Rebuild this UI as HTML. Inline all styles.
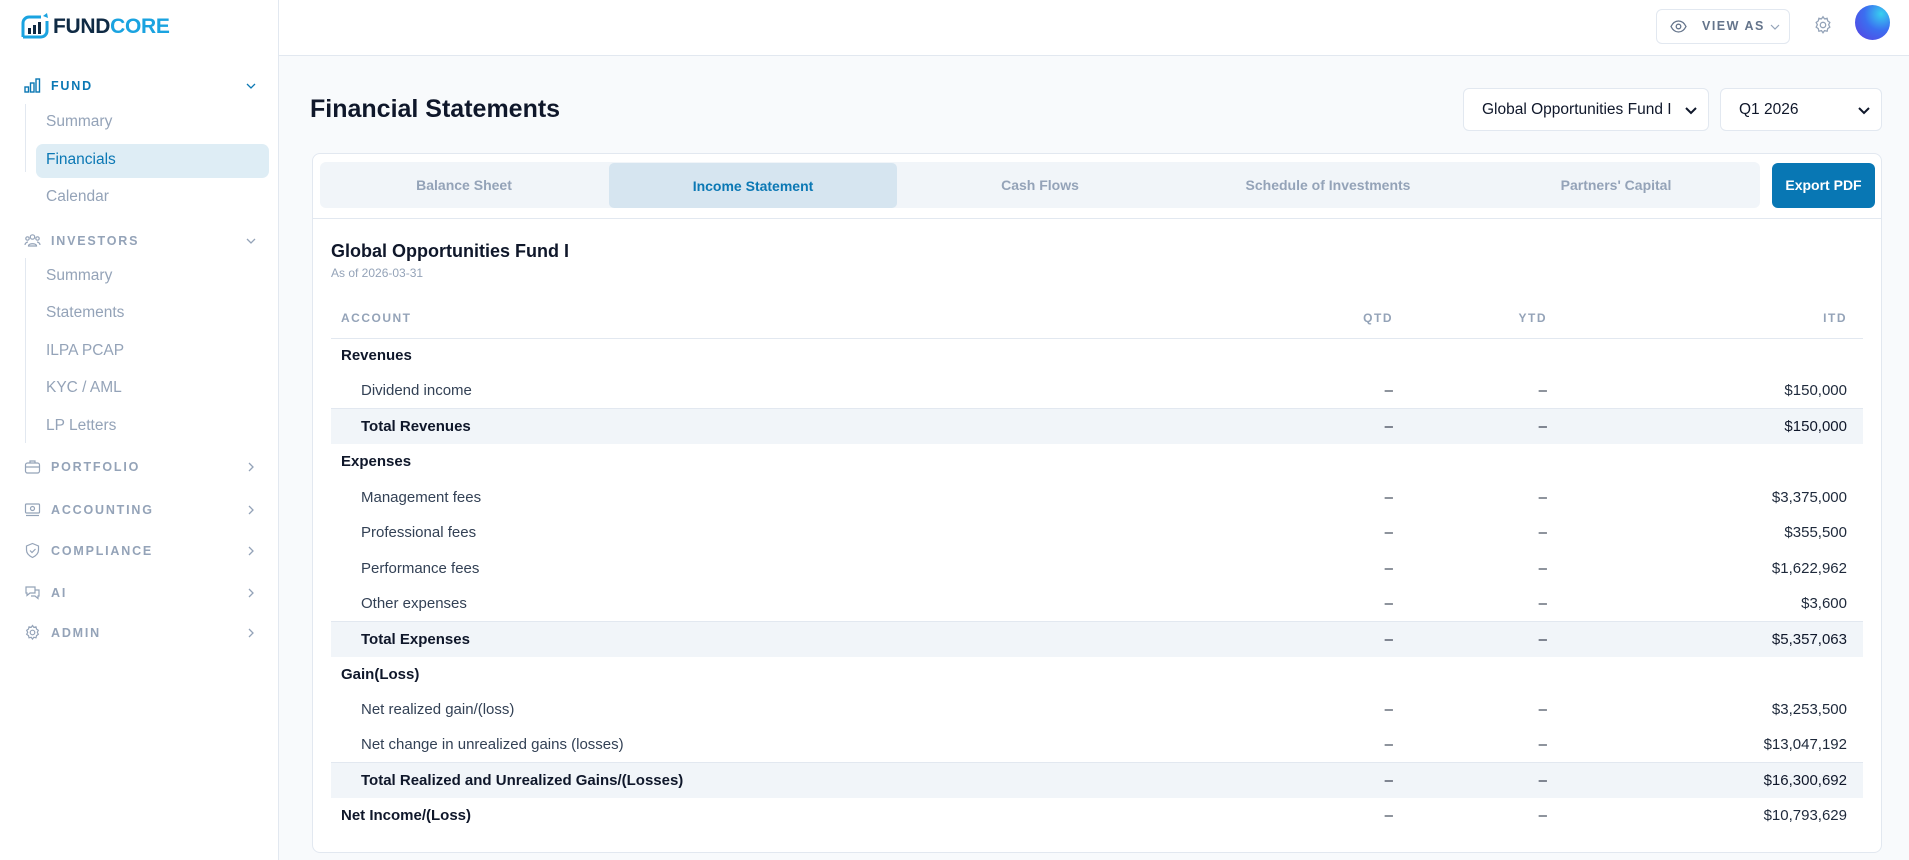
<!DOCTYPE html>
<html><head><meta charset="utf-8"><style>
*{box-sizing:border-box;margin:0;padding:0}
body{width:1909px;height:860px;overflow:hidden;font-family:"Liberation Sans",sans-serif;background:#f8fafc;color:#0f172a;position:relative}
.sb{position:absolute;left:0;top:0;width:279px;height:860px;background:#fff;border-right:1px solid #e2e8f0}
.hdr{position:absolute;left:279px;top:0;right:0;height:56px;background:#fff;border-bottom:1px solid #e2e8f0}
.logo{position:absolute;left:20px;top:13px;display:flex;align-items:center;font-weight:bold;font-size:21px;letter-spacing:-0.3px}
.sec{position:absolute;left:24px;display:flex;align-items:center;font-size:12.5px;font-weight:bold;letter-spacing:1.8px;color:#94a3b8;width:234px}
.sec svg{width:17px;height:17px;margin-right:10px}
.sec .ch{position:absolute;right:0;top:50%;margin-top:-7px;width:14px;height:14px;margin-right:0}
.it{position:absolute;left:46px;font-size:15.5px;color:#94a3b8}
.vl{position:absolute;left:25px;width:1px;background:#e2e8f0}
.act{position:absolute;left:36px;top:144px;width:233px;height:34px;background:#deedf5;border-radius:7px}
.title{position:absolute;left:310px;top:95px;font-size:25px;font-weight:bold}
.sel{position:absolute;top:88px;height:43px;background:#fff;border:1px solid #e2e8f0;border-radius:6px;font-size:15.5px;padding:12px 0 0 18px;color:#0f172a}
.sel svg{position:absolute;right:10px;top:14px}
.card{position:absolute;left:312px;top:153px;width:1570px;height:700px;background:#fff;border:1px solid #e2e8f0;border-radius:8px}
.tabs{position:absolute;left:320px;top:162px;width:1440px;height:46px;background:#f1f5f9;border-radius:6px}
.tab{position:absolute;top:0;height:46px;line-height:46px;text-align:center;font-size:14px;font-weight:bold;color:#94a3b8;width:288px}
.tab.a{background:#d6e5f0;color:#0b78b4;border-radius:5px;top:1px;height:45px}
.exp{position:absolute;left:1772px;top:163px;width:103px;height:45px;background:#0877b4;border-radius:6px;color:#fff;font-weight:bold;font-size:14px;line-height:45px;text-align:center}
.div{position:absolute;left:313px;top:218px;width:1568px;height:1px;background:#e2e8f0}
.fn{position:absolute;left:331px;top:241px;font-size:18px;font-weight:bold}
.asof{position:absolute;left:331px;top:266px;font-size:12px;color:#94a3b8}
table{position:absolute;left:331px;top:302px;width:1532px;border-collapse:collapse;font-size:15px}
th{height:36px;font-size:12px;letter-spacing:1.5px;color:#94a3b8;text-align:right;border-bottom:1px solid #e2e8f0;padding:0 16px 4px 10px}
th:first-child{text-align:left}
td{height:35.4px;padding:0 16px 0 10px;text-align:right;color:#1e293b}
td:first-child{text-align:left}
tr.h td:first-child{font-weight:bold;color:#0f172a}
tr.s td:first-child{padding-left:30px;color:#334155}
tr.t td{background:#f1f5f9;border-top:1px solid #e2e8f0;color:#0f172a}
tr.t td:first-child{padding-left:30px;font-weight:bold}
</style></head><body>
<div class="sb">
<div class="logo"><svg width="30" height="28" viewBox="0 0 30 28"><path d="M3 24 V10 a6 6 0 0 1 6-6 h12" fill="none" stroke="#1aa3e0" stroke-width="3"/><path d="M27 8 V18 a6 6 0 0 1-6 6 H3" fill="none" stroke="#1aa3e0" stroke-width="3"/><rect x="8" y="15" width="3" height="6" fill="#0f2a44"/><rect x="13" y="12" width="3" height="9" fill="#0f2a44"/><rect x="18" y="9" width="3" height="12" fill="#0f2a44"/><path d="M23 3 l4 -3 l1 5" fill="#1aa3e0"/></svg><span style="color:#0f2a44;margin-left:3px">FUND</span><span style="color:#1aa3e0">CORE</span></div>
<div class="sec" style="top:77px;color:#0b78b4"><svg viewBox="0 0 17 17" fill="none" stroke="#0b78b4" stroke-width="1.4"><rect x="1" y="10" width="3.5" height="5"/><rect x="6.5" y="6" width="3.5" height="9"/><rect x="12" y="2" width="3.5" height="13"/></svg>FUND<svg class="ch" viewBox="0 0 14 14" fill="none" stroke="#0b78b4" stroke-width="1.3"><path d="M3 5l4 4 4-4"/></svg></div>
<div class="vl" style="top:104px;height:68px"></div>
<div class="it" style="top:113px">Summary</div>
<div class="act"></div>
<div class="it" style="top:151px;color:#0b78b4">Financials</div>
<div class="it" style="top:188px">Calendar</div>
<div class="sec" style="top:232px"><svg viewBox="0 0 17 17" fill="none" stroke="#94a3b8" stroke-width="1.2"><circle cx="8.5" cy="5" r="2.2"/><circle cx="3.5" cy="6.5" r="1.7"/><circle cx="13.5" cy="6.5" r="1.7"/><path d="M4.5 14c0-3 8-3 8 0zM1 13c0-2 2-3 3-3M16 13c0-2-2-3-3-3"/></svg>INVESTORS<svg class="ch" viewBox="0 0 14 14" fill="none" stroke="#94a3b8" stroke-width="1.3"><path d="M3 5l4 4 4-4"/></svg></div>
<div class="vl" style="top:258px;height:185px"></div>
<div class="it" style="top:267px">Summary</div>
<div class="it" style="top:304px">Statements</div>
<div class="it" style="top:342px">ILPA PCAP</div>
<div class="it" style="top:379px">KYC / AML</div>
<div class="it" style="top:417px">LP Letters</div>
<div class="sec" style="top:458px"><svg viewBox="0 0 17 17" fill="none" stroke="#94a3b8" stroke-width="1.2"><rect x="1.5" y="5" width="14" height="10" rx="2"/><path d="M6 5V3h5v2M1.5 9h14"/></svg>PORTFOLIO<svg class="ch" viewBox="0 0 14 14" fill="none" stroke="#94a3b8" stroke-width="1.3"><path d="M5 3l4 4-4 4"/></svg></div>
<div class="sec" style="top:501px"><svg viewBox="0 0 17 17" fill="none" stroke="#94a3b8" stroke-width="1.2"><rect x="1.5" y="3" width="14" height="9" rx="1"/><circle cx="8.5" cy="7.5" r="2"/><path d="M2 14.5h13"/></svg>ACCOUNTING<svg class="ch" viewBox="0 0 14 14" fill="none" stroke="#94a3b8" stroke-width="1.3"><path d="M5 3l4 4-4 4"/></svg></div>
<div class="sec" style="top:542px"><svg viewBox="0 0 17 17" fill="none" stroke="#94a3b8" stroke-width="1.2"><path d="M8.5 1.5l6 2.5v4c0 4-3 6-6 7.5-3-1.5-6-3.5-6-7.5V4z"/><path d="M6 8.5l2 2 3.5-3.5"/></svg>COMPLIANCE<svg class="ch" viewBox="0 0 14 14" fill="none" stroke="#94a3b8" stroke-width="1.3"><path d="M5 3l4 4-4 4"/></svg></div>
<div class="sec" style="top:584px"><svg viewBox="0 0 17 17" fill="none" stroke="#94a3b8" stroke-width="1.2"><path d="M2 3h9v6H6l-3 2.5V9H2z"/><path d="M11 6h4v6h-1v2.5L11 12H7"/></svg>AI<svg class="ch" viewBox="0 0 14 14" fill="none" stroke="#94a3b8" stroke-width="1.3"><path d="M5 3l4 4-4 4"/></svg></div>
<div class="sec" style="top:624px"><svg viewBox="0 0 17 17" fill="none" stroke="#94a3b8" stroke-width="1.2"><circle cx="8.5" cy="8.5" r="2.3"/><path d="M8.5 1.5l1.3 1.8 2.2-.5.5 2.2 1.8 1.3-1 2 1 2-1.8 1.3-.5 2.2-2.2-.5-1.3 1.8-1.3-1.8-2.2.5-.5-2.2-1.8-1.3 1-2-1-2 1.8-1.3.5-2.2 2.2.5z"/></svg>ADMIN<svg class="ch" viewBox="0 0 14 14" fill="none" stroke="#94a3b8" stroke-width="1.3"><path d="M5 3l4 4-4 4"/></svg></div>
</div>
<div class="hdr">
<div style="position:absolute;left:1377px;top:9px;width:134px;height:35px;border:1px solid #e2e8f0;border-radius:6px;font-size:12.5px;font-weight:bold;letter-spacing:1.5px;color:#64748b;line-height:33px;padding-left:45px">VIEW AS
<svg style="position:absolute;left:13px;top:9px" width="17" height="15" viewBox="0 0 17 15" fill="none" stroke="#64748b" stroke-width="1.3"><path d="M1 7.5C3 3.5 6 2 8.5 2s5.5 1.5 7.5 5.5c-2 4-5 5.5-7.5 5.5S3 11.5 1 7.5z"/><circle cx="8.5" cy="7.5" r="2.3"/></svg>
<svg style="position:absolute;left:112px;top:11px" width="12" height="12" viewBox="0 0 12 12" fill="none" stroke="#94a3b8" stroke-width="1.2"><path d="M2 4l4 4 4-4"/></svg></div>
<svg style="position:absolute;left:1534px;top:15px" width="20" height="20" viewBox="0 0 17 17" fill="none" stroke="#94a3b8" stroke-width="1.1"><circle cx="8.5" cy="8.5" r="2.3"/><path d="M8.5 1.5l1.3 1.8 2.2-.5.5 2.2 1.8 1.3-1 2 1 2-1.8 1.3-.5 2.2-2.2-.5-1.3 1.8-1.3-1.8-2.2.5-.5-2.2-1.8-1.3 1-2-1-2 1.8-1.3.5-2.2 2.2.5z"/></svg>
<div style="position:absolute;left:1576px;top:5px;width:35px;height:35px;border-radius:50%;background:radial-gradient(circle at 75% 25%,#38d0f0,#3b6ff0 45%,#5b3ee0)"></div>
</div>
<div class="title">Financial Statements</div>
<div class="sel" style="left:1463px;width:246px">Global Opportunities Fund I<svg width="14" height="14" viewBox="0 0 14 14" fill="none" stroke="#0f172a" stroke-width="2"><path d="M2 5l5 5 5-5"/></svg></div>
<div class="sel" style="left:1720px;width:162px">Q1 2026<svg width="14" height="14" viewBox="0 0 14 14" fill="none" stroke="#0f172a" stroke-width="2"><path d="M2 5l5 5 5-5"/></svg></div>
<div class="card"></div>
<div class="tabs">
<div class="tab" style="left:0">Balance Sheet</div>
<div class="tab a" style="left:289px">Income Statement</div>
<div class="tab" style="left:576px">Cash Flows</div>
<div class="tab" style="left:864px">Schedule of Investments</div>
<div class="tab" style="left:1152px">Partners' Capital</div>
</div>
<div class="exp">Export PDF</div>
<div class="div"></div>
<div class="fn">Global Opportunities Fund I</div>
<div class="asof">As of 2026-03-31</div>
<table>
<tr><th>ACCOUNT</th><th style="width:160px">QTD</th><th style="width:154px">YTD</th><th style="width:300px">ITD</th></tr>
<tr class="h"><td>Revenues</td><td></td><td></td><td></td></tr>
<tr class="s"><td>Dividend income</td><td>–</td><td>–</td><td>$150,000</td></tr>
<tr class="t"><td>Total Revenues</td><td>–</td><td>–</td><td>$150,000</td></tr>
<tr class="h"><td>Expenses</td><td></td><td></td><td></td></tr>
<tr class="s"><td>Management fees</td><td>–</td><td>–</td><td>$3,375,000</td></tr>
<tr class="s"><td>Professional fees</td><td>–</td><td>–</td><td>$355,500</td></tr>
<tr class="s"><td>Performance fees</td><td>–</td><td>–</td><td>$1,622,962</td></tr>
<tr class="s"><td>Other expenses</td><td>–</td><td>–</td><td>$3,600</td></tr>
<tr class="t"><td>Total Expenses</td><td>–</td><td>–</td><td>$5,357,063</td></tr>
<tr class="h"><td>Gain(Loss)</td><td></td><td></td><td></td></tr>
<tr class="s"><td>Net realized gain/(loss)</td><td>–</td><td>–</td><td>$3,253,500</td></tr>
<tr class="s"><td>Net change in unrealized gains (losses)</td><td>–</td><td>–</td><td>$13,047,192</td></tr>
<tr class="t"><td>Total Realized and Unrealized Gains/(Losses)</td><td>–</td><td>–</td><td>$16,300,692</td></tr>
<tr class="h"><td>Net Income/(Loss)</td><td>–</td><td>–</td><td>$10,793,629</td></tr>
</table>
</body></html>
